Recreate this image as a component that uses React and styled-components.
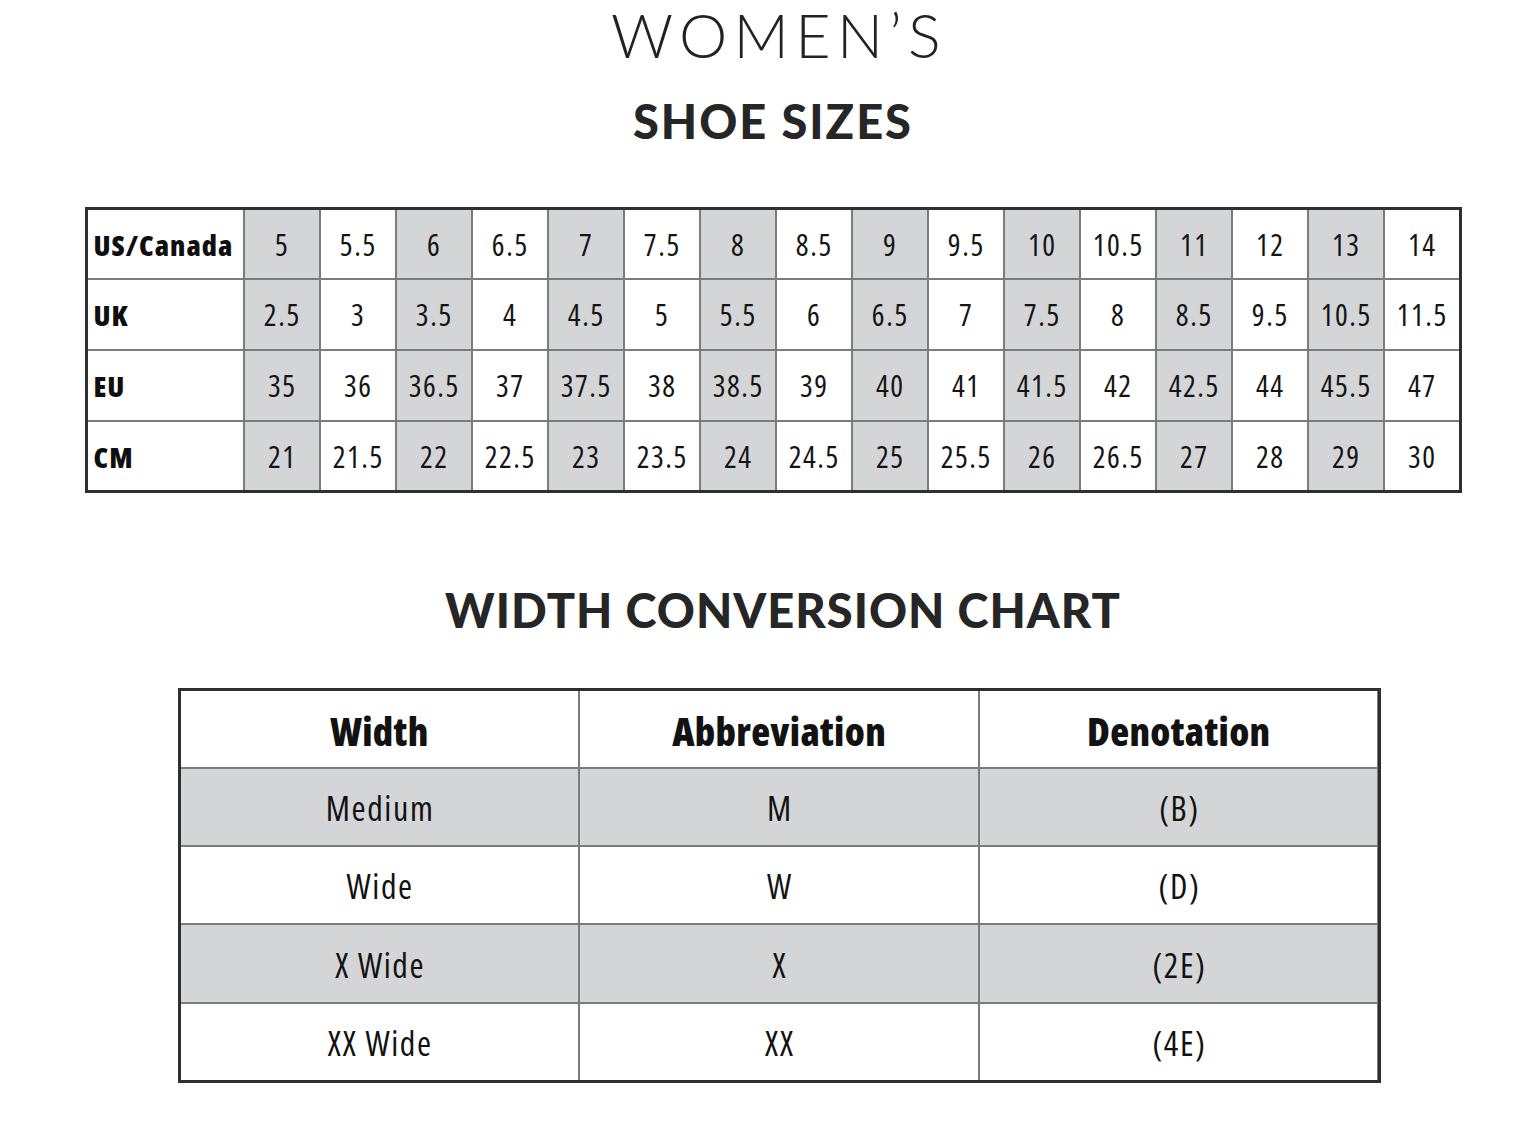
import React from "react";
import styled, { createGlobalStyle } from "styled-components";

const Global = createGlobalStyle`
  html, body { margin: 0; padding: 0; background: #fff; }
  body { font-family: "Liberation Sans", Arial, sans-serif; color: #1d1d1d; }
`;

const Page = styled.main`
  width: 1526px;
  min-height: 1145px;
  box-sizing: border-box;
  padding: 0 0 0 20px;
  display: flex;
  flex-direction: column;
  align-items: center;
`;

const Title = styled.h1`
  margin: 0;
  font-family: Lato, "Open Sans", sans-serif;
  font-weight: 300;
  font-size: 61px;
  line-height: 70px;
  letter-spacing: 6.3px;
  color: #222;
  padding-left: 12px;
`;

const Heading = styled.h2`
  margin: ${(p) => p.$top}px 0 0;
  font-family: Lato, "Open Sans", sans-serif;
  font-weight: 900;
  font-size: ${(p) => p.$size || 47}px;
  line-height: 56px;
  letter-spacing: ${(p) => p.$ls || 1}px;
  color: #262626;
  padding-left: ${(p) => p.$shift || 0}px;
`;

const condensed = `
  font-family: "Open Sans", "DejaVu Sans Condensed", "DejaVu Sans", sans-serif;
  font-stretch: 75%;
`;

const SizeGrid = styled.div`
  margin-top: ${(p) => p.$top}px;
  display: grid;
  grid-template-columns: 155px repeat(16, 74px);
  grid-template-rows: 68px 69px 69px 68px;
  gap: 2px;
  background: #7b7b7b;
  border: 3px solid #2f2f2f;
`;

const Cell = styled.div`
  background: ${(p) => (p.$shade ? "#d4d5d7" : "#ffffff")};
  display: flex;
  align-items: center;
  justify-content: center;
  ${condensed}
  font-size: 30px;
  letter-spacing: 1.6px;
  text-indent: 1.6px;
  color: #141414;
`;

const LabelCell = styled(Cell)`
  justify-content: flex-start;
  padding-left: 6px;
  font-weight: 800;
  font-size: 29px;
  letter-spacing: 1px;
  text-indent: 0;
  color: #0f0f0f;
`;

const WidthGrid = styled.div`
  margin-top: ${(p) => p.$top}px;
  width: 1203px;
  box-sizing: border-box;
  display: grid;
  grid-template-columns: repeat(3, 1fr);
  grid-template-rows: 76px 76px 76px 77px 76px;
  gap: 2px;
  background: #7b7b7b;
  border: 3px solid #2f2f2f;
  margin-left: 12px;
`;

const WCell = styled.div`
  background: ${(p) => (p.$shade ? "#d4d5d7" : "#ffffff")};
  display: flex;
  align-items: center;
  justify-content: center;
  ${condensed}
  font-size: ${(p) => (p.$head ? 39 : 34)}px;
  font-weight: ${(p) => (p.$head ? 800 : 400)};
  letter-spacing: ${(p) => (p.$head ? 0.3 : 1.6)}px;
  text-indent: ${(p) => (p.$head ? 0.3 : 1.6)}px;
  color: #121212;
  padding-top: 2px;
`;

const rows = [
  ["US/Canada", ["5", "5.5", "6", "6.5", "7", "7.5", "8", "8.5", "9", "9.5", "10", "10.5", "11", "12", "13", "14"]],
  ["UK", ["2.5", "3", "3.5", "4", "4.5", "5", "5.5", "6", "6.5", "7", "7.5", "8", "8.5", "9.5", "10.5", "11.5"]],
  ["EU", ["35", "36", "36.5", "37", "37.5", "38", "38.5", "39", "40", "41", "41.5", "42", "42.5", "44", "45.5", "47"]],
  ["CM", ["21", "21.5", "22", "22.5", "23", "23.5", "24", "24.5", "25", "25.5", "26", "26.5", "27", "28", "29", "30"]],
];

const widths = [
  ["Medium", "M", "(B)"],
  ["Wide", "W", "(D)"],
  ["X Wide", "X", "(2E)"],
  ["XX Wide", "XX", "(4E)"],
];

export default function App() {
  return (
    <>
      <Global />
      <Page>
        <Title>WOMEN’S</Title>
        <Heading $top={23} $ls={2}>SHOE SIZES</Heading>
        <SizeGrid $top={58}>
          {rows.map(([label, vals]) => (
            <React.Fragment key={label}>
              <LabelCell>{label}</LabelCell>
              {vals.map((v, i) => (
                <Cell key={i} $shade={i % 2 === 0}>{v}</Cell>
              ))}
            </React.Fragment>
          ))}
        </SizeGrid>
        <Heading $top={89} $shift={20} $size={47}>WIDTH CONVERSION CHART</Heading>
        <WidthGrid $top={50}>
          <WCell $head>Width</WCell>
          <WCell $head>Abbreviation</WCell>
          <WCell $head>Denotation</WCell>
          {widths.map((r, ri) =>
            r.map((v, ci) => (
              <WCell key={`${ri}-${ci}`} $shade={ri % 2 === 0}>{v}</WCell>
            ))
          )}
        </WidthGrid>
      </Page>
    </>
  );
}
